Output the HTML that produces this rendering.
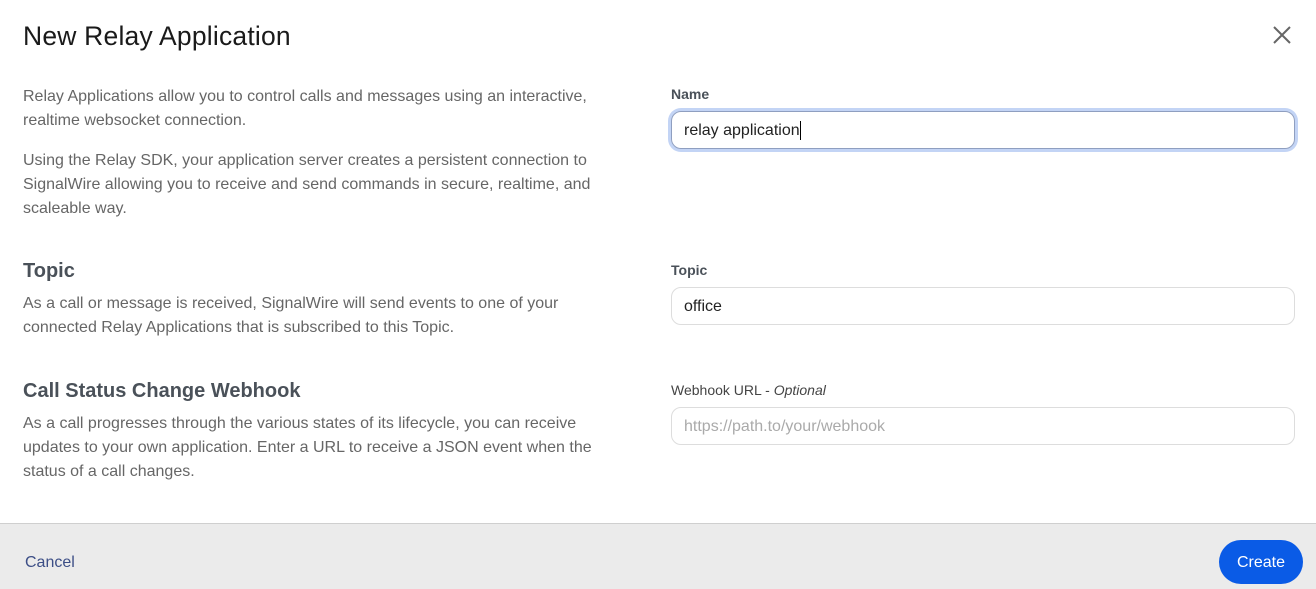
<!DOCTYPE html>
<html><head><meta charset="utf-8"><style>
*{box-sizing:border-box;margin:0;padding:0}
body{width:1316px;height:589px;overflow:hidden;background:#fff;font-family:"Liberation Sans",sans-serif;position:relative}
.a{position:absolute}
h1{position:absolute;left:23px;top:21px;font-size:26.5px;font-weight:400;color:#1a1a1a;letter-spacing:0.2px}
p.t{position:absolute;left:23px;font-size:16px;line-height:24px;color:#666;width:600px}
h2{position:absolute;left:23px;font-size:20px;font-weight:700;color:#4a5159}
.l{position:absolute;left:671px;font-size:14px;color:#444}
.lb{font-weight:700;color:#4a5159}
.in{position:absolute;left:671px;width:624px;height:38px;border:1px solid #ddd;border-radius:10px;font-size:16px;padding:0 12px;line-height:38px;color:#222}
</style></head><body>
<h1>New Relay Application</h1>
<svg class="a" style="left:1273px;top:26px" width="18" height="18" viewBox="0 0 18 18"><path d="M1 1L17 17M17 1L1 17" stroke="#666" stroke-width="2"/></svg>
<p class="t" style="top:85px">Relay Applications allow you to control calls and messages using an interactive, realtime websocket connection.</p>
<p class="t" style="top:149px">Using the Relay SDK, your application server creates a persistent connection to SignalWire allowing you to receive and send commands in secure, realtime, and scaleable way.</p>
<h2 style="top:260px">Topic</h2>
<p class="t" style="top:292px">As a call or message is received, SignalWire will send events to one of your connected Relay Applications that is subscribed to this Topic.</p>
<h2 style="top:380px">Call Status Change Webhook</h2>
<p class="t" style="top:412px">As a call progresses through the various states of its lifecycle, you can receive updates to your own application. Enter a URL to receive a JSON event when the status of a call changes.</p>
<div class="l lb" style="top:86px">Name</div>
<div class="in" style="top:111px;border:1px solid #8f9fc0;box-shadow:0 0 0 3px #c3d4f5">relay application<span style="display:inline-block;width:1px;height:19px;background:#000;vertical-align:middle"></span></div>
<div class="l lb" style="top:262px">Topic</div>
<div class="in" style="top:287px">office</div>
<div class="l" style="top:382px">Webhook URL - <i>Optional</i></div>
<div class="in" style="top:407px;color:#aaa">https://path.to/your/webhook</div>
<div class="a" style="left:0;top:523px;width:1316px;height:66px;background:#ebebeb;border-top:1px solid #cfcfcf"></div>
<div class="a" style="left:25px;top:554px;font-size:16px;color:#3c4e86">Cancel</div>
<div class="a" style="left:1219px;top:540px;width:84px;height:44px;border-radius:22px;background:#0a5be6;color:#fff;font-size:16px;text-align:center;line-height:45px">Create</div>
</body></html>
